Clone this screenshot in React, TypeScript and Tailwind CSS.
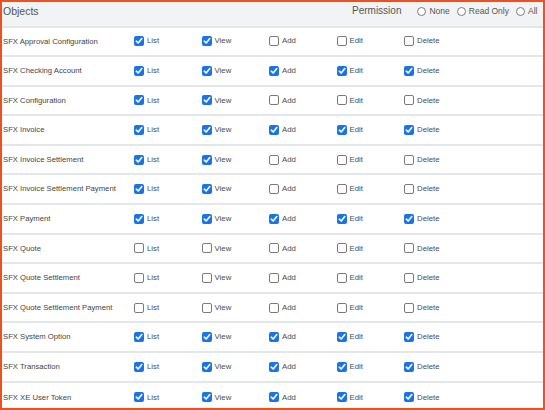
const perms = ["List", "View", "Add", "Edit", "Delete"];

type Row = { name: string; on: boolean[] };

const LV = [true, true, false, false, false];
const ALL = [true, true, true, true, true];
const NONE = [false, false, false, false, false];

const rows: Row[] = [
  { name: "SFX Approval Configuration", on: LV },
  { name: "SFX Checking Account", on: ALL },
  { name: "SFX Configuration", on: LV },
  { name: "SFX Invoice", on: ALL },
  { name: "SFX Invoice Settlement", on: LV },
  { name: "SFX Invoice Settlement Payment", on: LV },
  { name: "SFX Payment", on: ALL },
  { name: "SFX Quote", on: NONE },
  { name: "SFX Quote Settlement", on: NONE },
  { name: "SFX Quote Settlement Payment", on: NONE },
  { name: "SFX System Option", on: ALL },
  { name: "SFX Transaction", on: ALL },
  { name: "SFX XE User Token", on: ALL },
];

function Check({ checked }: { checked: boolean }) {
  if (checked) {
    return (
      <span className="w-[10px] h-[10px] rounded-[2px] bg-[#1a73e8] flex items-center justify-center shrink-0">
        <svg width="8" height="8" viewBox="0 0 8 8">
          <path d="M1.3 4.2 L3.2 6 L6.8 1.6" fill="none" stroke="#fff" strokeWidth="1.6" strokeLinecap="round" strokeLinejoin="round" />
        </svg>
      </span>
    );
  }
  return <span className="w-[10px] h-[10px] rounded-[2px] border border-[#7a7a7a] bg-white shrink-0" />;
}

function Radio({ label }: { label: string }) {
  return (
    <label className="flex items-center gap-[3px]">
      <span className="w-[9px] h-[9px] rounded-full border border-[#7a7a7a] bg-white shrink-0" />
      <span className="text-[8.5px] leading-[10px] text-[#555]">{label}</span>
    </label>
  );
}

export default function App() {
  return (
    <div
      className="w-[545px] h-[410px] border-2 border-[#f0501e] bg-white overflow-hidden flex flex-col"
      style={{ fontFamily: '"Liberation Sans", Arial, sans-serif' }}
    >
      {/* Header */}
      <div className="h-[25.5px] shrink-0 bg-[#f1f3f4] flex items-start pt-[3px] border-b-2 border-[#e3e7ea]">
        <div className="w-[350px] pl-[1px] text-[10.5px] leading-[12px] text-[#555]">Objects</div>
        <div className="text-[10px] leading-[12px] text-[#555]">Permission</div>
        <div className="flex items-center gap-[7px] ml-[16px] mt-[1px]">
          <Radio label="None" />
          <Radio label="Read Only" />
          <Radio label="All" />
        </div>
      </div>

      {/* Rows */}
      {rows.map((r, i) => (
        <div
          key={r.name}
          className={`h-[29.6px] shrink-0 flex items-center ${i < rows.length - 1 ? "border-b-2 border-[#e3e7ea]" : ""}`}
        >
          <div className="w-[132px] pl-[1px] text-[7.7px] text-[#444] whitespace-nowrap">{r.name}</div>
          {perms.map((p, j) => (
            <div key={p} className="w-[67.5px] flex items-center gap-[3px]">
              <Check checked={r.on[j]} />
              <span className="text-[7.8px] text-[#4d4d4d]">{p}</span>
            </div>
          ))}
        </div>
      ))}
    </div>
  );
}
